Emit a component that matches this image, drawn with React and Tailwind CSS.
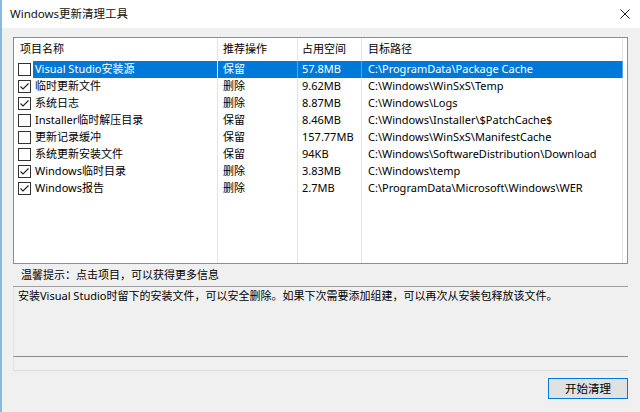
import React from 'react'

const rows = [
  { name: 'Visual Studio安装源', action: '保留', size: '57.8MB', path: 'C:\\ProgramData\\Package Cache', checked: false },
  { name: '临时更新文件', action: '删除', size: '9.62MB', path: 'C:\\Windows\\WinSxS\\Temp', checked: true },
  { name: '系统日志', action: '删除', size: '8.87MB', path: 'C:\\Windows\\Logs', checked: true },
  { name: 'Installer临时解压目录', action: '保留', size: '8.46MB', path: 'C:\\Windows\\Installer\\$PatchCache$', checked: false },
  { name: '更新记录缓冲', action: '保留', size: '157.77MB', path: 'C:\\Windows\\WinSxS\\ManifestCache', checked: false },
  { name: '系统更新安装文件', action: '保留', size: '94KB', path: 'C:\\Windows\\SoftwareDistribution\\Download', checked: false },
  { name: 'Windows临时目录', action: '删除', size: '3.83MB', path: 'C:\\Windows\\temp', checked: true },
  { name: 'Windows报告', action: '删除', size: '2.7MB', path: 'C:\\ProgramData\\Microsoft\\Windows\\WER', checked: true },
]

const cols = 'grid grid-cols-[204px_80px_64px_261px]'

function Checkbox({ checked }) {
  return (
    <span className="w-[13px] h-[13px] border border-[#333333] bg-white flex items-center justify-center shrink-0">
      {checked && (
        <svg width="11" height="11" viewBox="0 0 11 11">
          <polyline points="1.5,5.5 4,8 9.5,2.5" fill="none" stroke="#222" strokeWidth="1.1" />
        </svg>
      )}
    </span>
  )
}

export default function App() {
  const [selected, setSelected] = React.useState(0)

  return (
    <div className="w-[640px] h-[412px] flex flex-col bg-[#f0f0f0] border-l-2 border-[#8ab8e6] font-['Noto_Sans','Noto_Sans_CJK_SC',sans-serif] text-[11px] text-black overflow-hidden">
      {/* 标题栏 */}
      <div className="h-[28px] bg-white flex items-center justify-between pl-[8px] pr-[10px] shrink-0">
        <span className="text-[11.5px] text-[#111]">Windows更新清理工具</span>
        <svg width="10" height="10" viewBox="0 0 10 10">
          <path d="M0.5 0.5 L9.5 9.5 M9.5 0.5 L0.5 9.5" stroke="#222" strokeWidth="1" />
        </svg>
      </div>

      <div className="flex-1 flex flex-col pl-[11px] pr-[12px] pt-[9px]">
        {/* 列表 */}
        <div className="h-[227px] border border-[#8a8f96] bg-white flex flex-col shrink-0">
          <div className={`${cols} h-[23px] items-stretch`}>
            <div className="border-r border-[#e5e5e5] pl-[6px] flex items-center">项目名称</div>
            <div className="border-r border-[#e5e5e5] pl-[5px] flex items-center">推荐操作</div>
            <div className="border-r border-[#e5e5e5] pl-[4px] flex items-center">占用空间</div>
            <div className="border-r border-[#e5e5e5] pl-[6px] flex items-center">目标路径</div>
          </div>
          {rows.map((r, i) => {
            const on = i === selected
            const cell = on ? 'bg-[#0078d7] text-white border-r border-[#5aa3e3]' : 'border-r border-[#e5e5e5]'
            return (
              <div key={i} className={`${cols} h-[17px] items-stretch cursor-default`} onClick={() => setSelected(i)}>
                <div className="border-r border-[#e5e5e5] flex items-center pl-[4px]">
                  <Checkbox checked={r.checked} />
                  <span className={`ml-[2px] h-full flex-1 flex items-center pl-[2px] ${on ? 'bg-[#0078d7] text-white' : ''}`}>{r.name}</span>
                </div>
                <div className={`${cell} pl-[5px] flex items-center`}>{r.action}</div>
                <div className={`${cell} pl-[4px] flex items-center`}>{r.size}</div>
                <div className={`${cell} pl-[6px] flex items-center whitespace-nowrap`}>{r.path}</div>
              </div>
            )
          })}
          <div className={`${cols} flex-1`}>
            <div className="border-r border-[#e5e5e5]" />
            <div className="border-r border-[#e5e5e5]" />
            <div className="border-r border-[#e5e5e5]" />
            <div className="border-r border-[#e5e5e5]" />
          </div>
        </div>

        {/* 提示 */}
        <div className="h-[23px] border-b border-[#a0a0a0] flex items-center pl-[8px] shrink-0">
          温馨提示：点击项目，可以获得更多信息
        </div>

        {/* 说明 */}
        <div className="h-[69px] border-l border-[#e3e3e3] pl-[4px] pt-[1px] shrink-0 whitespace-nowrap">
          安装Visual Studio时留下的安装文件，可以安全删除。如果下次需要添加组建，可以再次从安装包释放该文件。
        </div>

        {/* 状态 */}
        <div className="h-[15px] border-t border-[#8c8c8c] border-b border-b-[#dcdcdc] border-l border-l-[#e3e3e3] shrink-0" />

        <div className="flex justify-end pt-[7px]">
          <button className="w-[80px] h-[21px] border border-[#0078d7] bg-[#e1e1e1] text-[11.5px] flex items-center justify-center">
            开始清理
          </button>
        </div>
      </div>
    </div>
  )
}
